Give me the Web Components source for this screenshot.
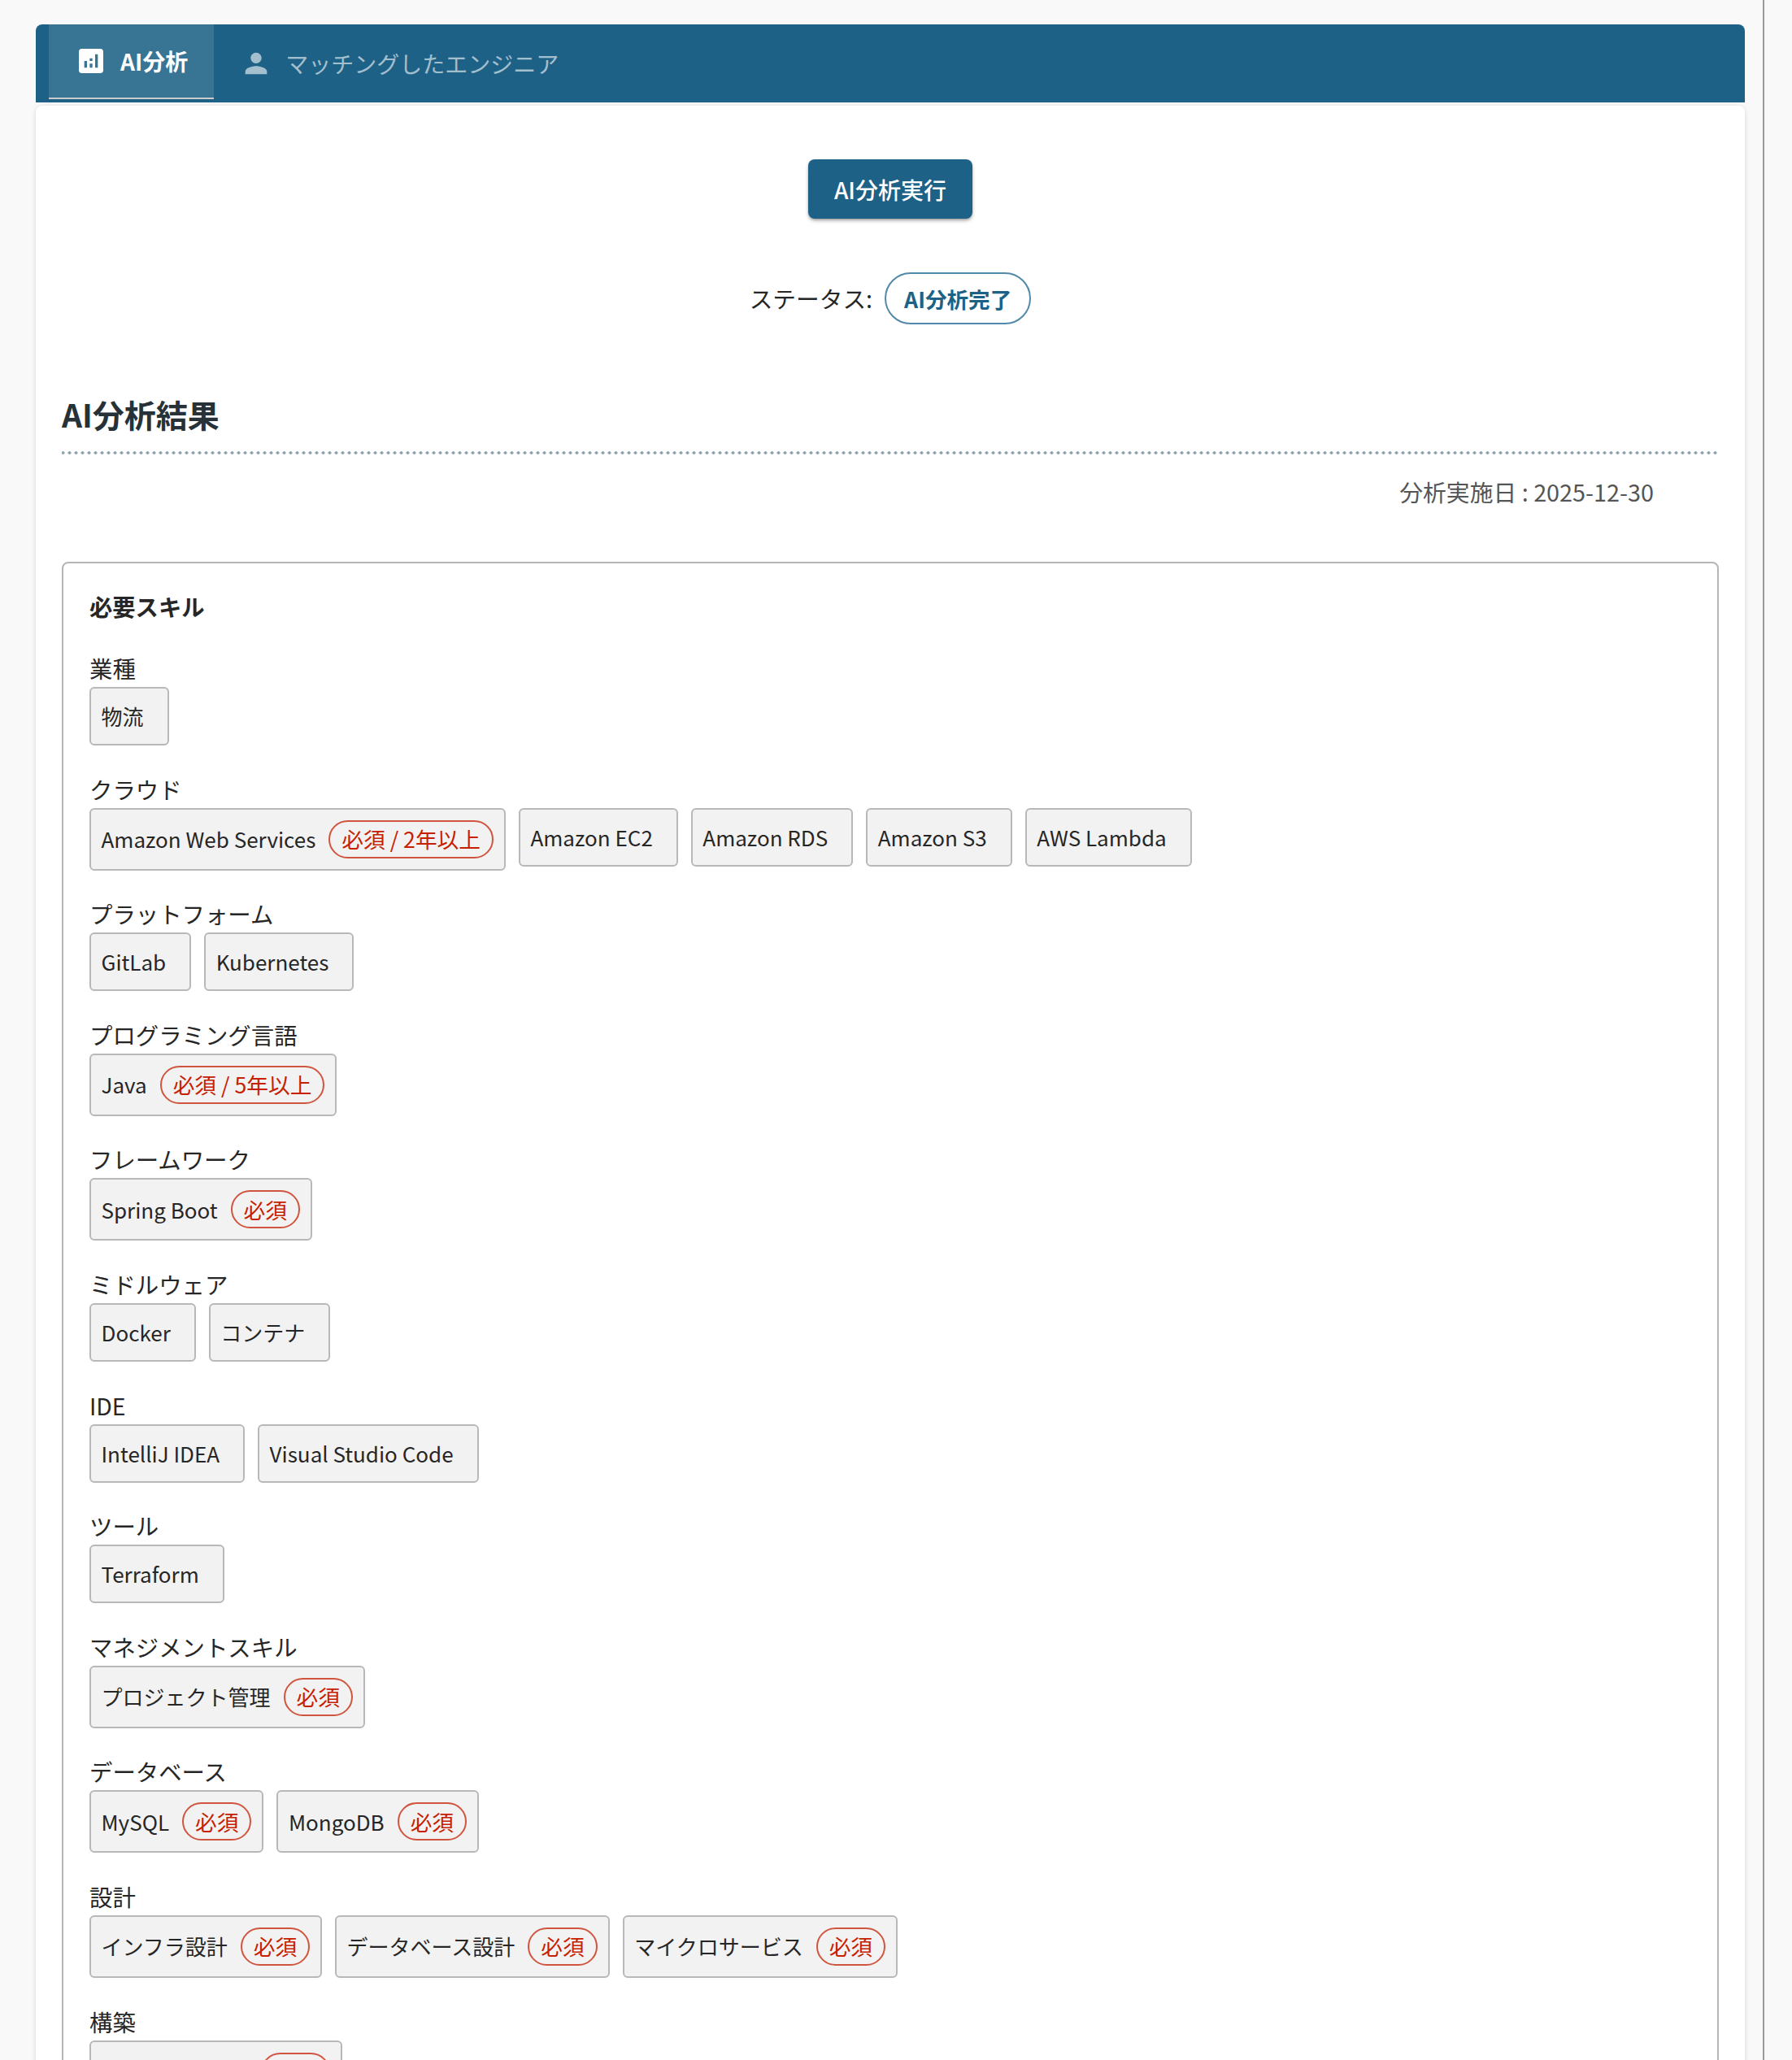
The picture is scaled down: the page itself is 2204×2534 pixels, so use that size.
<!DOCTYPE html>
<html lang="ja">
<head>
<meta charset="utf-8">
<title>AI分析</title>
<style>
  html, body { margin: 0; height: 2534px; overflow: hidden; background: #f9f9f9; }
  body { font-family: "Noto Sans CJK JP", "Noto Sans", sans-serif; color: #262626; }
</style>
</head>
<body>

<app-shell>
  <tab-bar slot="tabs">
    <tab-item icon="analytics" active>AI分析</tab-item>
    <tab-item icon="person">マッチングしたエンジニア</tab-item>
  </tab-bar>

  <action-panel></action-panel>
  <section-title>AI分析結果</section-title>
  <analysis-date>分析実施日 : 2025-12-30</analysis-date>

  <skill-box heading="必要スキル">
    <skill-group label="業種"><skill-chip>物流</skill-chip></skill-group>
    <skill-group label="クラウド">
      <skill-chip badge="必須 / 2年以上">Amazon Web Services</skill-chip>
      <skill-chip>Amazon EC2</skill-chip>
      <skill-chip>Amazon RDS</skill-chip>
      <skill-chip>Amazon S3</skill-chip>
      <skill-chip>AWS Lambda</skill-chip>
    </skill-group>
    <skill-group label="プラットフォーム">
      <skill-chip>GitLab</skill-chip>
      <skill-chip>Kubernetes</skill-chip>
    </skill-group>
    <skill-group label="プログラミング言語"><skill-chip badge="必須 / 5年以上">Java</skill-chip></skill-group>
    <skill-group label="フレームワーク"><skill-chip badge="必須">Spring Boot</skill-chip></skill-group>
    <skill-group label="ミドルウェア">
      <skill-chip>Docker</skill-chip>
      <skill-chip>コンテナ</skill-chip>
    </skill-group>
    <skill-group label="IDE">
      <skill-chip>IntelliJ IDEA</skill-chip>
      <skill-chip>Visual Studio Code</skill-chip>
    </skill-group>
    <skill-group label="ツール"><skill-chip>Terraform</skill-chip></skill-group>
    <skill-group label="マネジメントスキル"><skill-chip badge="必須">プロジェクト管理</skill-chip></skill-group>
    <skill-group label="データベース">
      <skill-chip badge="必須">MySQL</skill-chip>
      <skill-chip badge="必須">MongoDB</skill-chip>
    </skill-group>
    <skill-group label="設計">
      <skill-chip badge="必須">インフラ設計</skill-chip>
      <skill-chip badge="必須">データベース設計</skill-chip>
      <skill-chip badge="必須">マイクロサービス</skill-chip>
    </skill-group>
    <!-- the chip's own text is below the fold in the reference, only its width shows -->
    <skill-group label="構築"><skill-chip badge="必須" style="width: 311px"></skill-chip></skill-group>
  </skill-box>
</app-shell>

<script>
const ICONS = {
    analytics: 'M19 3H5c-1.1 0-2 .9-2 2v14c0 1.1.9 2 2 2h14c1.1 0 2-.9 2-2V5c0-1.1-.9-2-2-2zM9 17H7v-5h2v5zm4 0h-2v-3h2v3zm0-5h-2v-2h2v2zm4 5h-2V7h2v10z',
    person: 'M12 12c2.21 0 4-1.79 4-4s-1.79-4-4-4-4 1.79-4 4 1.79 4 4 4zm0 2c-2.67 0-8 1.34-8 4v2h16v-2c0-2.66-5.33-4-8-4z'
};

class AppShell extends HTMLElement {
    constructor() {
        super();
        this.attachShadow({ mode: 'open' });
        this.shadowRoot.innerHTML = `
            <style>
                :host {
                    display: block;
                    box-sizing: border-box;
                    width: 2170px;
                    height: 2534px;
                    padding: 30px 22px 0 44px;
                    border-right: 2px solid #999;
                    overflow: hidden;
                }
                .panel {
                    margin-top: 4px;
                    padding: 66px 32px 0;
                    background: #fff;
                    border-radius: 8px 8px 0 0;
                    box-shadow: 0 1px 6px rgba(0, 0, 0, 0.14);
                    height: 2500px;
                    box-sizing: border-box;
                }
            </style>
            <slot name="tabs"></slot>
            <div class="panel"><slot></slot></div>
        `;
    }
}

class TabBar extends HTMLElement {
    constructor() {
        super();
        this.attachShadow({ mode: 'open' });
        this.shadowRoot.innerHTML = `
            <style>
                :host {
                    display: flex;
                    align-items: flex-start;
                    height: 96px;
                    padding: 0 16px;
                    background: #1d6186;
                    border-radius: 8px 8px 0 0;
                }
            </style>
            <slot></slot>
        `;
    }
}

class TabItem extends HTMLElement {
    constructor() {
        super();
        this.attachShadow({ mode: 'open' });
        const path = ICONS[this.getAttribute('icon')];
        this.shadowRoot.innerHTML = `
            <style>
                :host {
                    display: flex;
                    align-items: center;
                    gap: 16px;
                    box-sizing: border-box;
                    height: 96px;
                    padding: 0 32px;
                    font-size: 28px;
                    color: rgba(255, 255, 255, 0.6);
                }
                :host([active]) {
                    height: 92px;
                    color: #fff;
                    font-weight: 700;
                    background: rgba(255, 255, 255, 0.12);
                    border-bottom: 2px solid #ccc;
                }
                svg { width: 40px; height: 40px; fill: currentColor; display: block; }
            </style>
            <svg viewBox="0 0 24 24"><path d="${path}"/></svg>
            <slot></slot>
        `;
    }
}

class ActionPanel extends HTMLElement {
    constructor() {
        super();
        this.attachShadow({ mode: 'open' });
        this.shadowRoot.innerHTML = `
            <style>
                :host {
                    display: flex;
                    flex-direction: column;
                    align-items: center;
                    gap: 66px;
                }
                button {
                    height: 73px;
                    padding: 0 32px;
                    border: 0;
                    border-radius: 8px;
                    background: #1d6186;
                    color: #fff;
                    font: 500 28px "Noto Sans CJK JP", sans-serif;
                    box-shadow: 0 3px 5px -1px rgba(0,0,0,.35), 0 1px 3px rgba(0,0,0,.15);
                }
                .status { display: flex; align-items: center; gap: 15px; font-size: 28.7px; color: #262626; }
                .status .text { padding-bottom: 2px; }
                .pill {
                    box-sizing: border-box;
                    height: 64px;
                    padding: 0 22px;
                    display: flex;
                    align-items: center;
                    border: 2px solid #5089a9;
                    border-radius: 32px;
                    color: #1d6186;
                    font-size: 26.6px;
                    font-weight: 700;
                }
            </style>
            <button>AI分析実行</button>
            <div class="status"><span class="text">ステータス:</span><span class="pill">AI分析完了</span></div>
        `;
    }
}

class SectionTitle extends HTMLElement {
    constructor() {
        super();
        this.attachShadow({ mode: 'open' });
        this.shadowRoot.innerHTML = `
            <style>
                :host {
                    display: block;
                    margin-top: 80px;
                    padding-bottom: 20px;
                    font-size: 39px;
                    font-weight: 700;
                    line-height: 60px;
                    color: #263238;
                    background: radial-gradient(circle, #90a4ae 1.7px, transparent 2px) -2.5px 100% / 8px 4px repeat-x;
                }
            </style>
            <slot></slot>
        `;
    }
}

class AnalysisDate extends HTMLElement {
    constructor() {
        super();
        this.attachShadow({ mode: 'open' });
        this.shadowRoot.innerHTML = `
            <style>
                :host {
                    display: block;
                    margin-top: 25px;
                    padding-right: 80px;
                    text-align: right;
                    font-size: 28.8px;
                    line-height: 42px;
                    color: #555;
                }
            </style>
            <slot></slot>
        `;
    }
}

class SkillBox extends HTMLElement {
    constructor() {
        super();
        this.attachShadow({ mode: 'open' });
        this.shadowRoot.innerHTML = `
            <style>
                :host {
                    display: block;
                    margin-top: 65px;
                    padding: 32px;
                    border: 2px solid #b5b5b5;
                    border-radius: 8px;
                    background: #fff;
                }
                h3 { margin: 0 0 34px; font-size: 28.3px; font-weight: 700; line-height: 42px; color: #262626; }
            </style>
            <h3>${this.getAttribute('heading')}</h3>
            <slot></slot>
        `;
    }
}

class SkillGroup extends HTMLElement {
    constructor() {
        super();
        this.attachShadow({ mode: 'open' });
        this.shadowRoot.innerHTML = `
            <style>
                :host { display: block; margin-bottom: 32.6px; }
                .label { margin-bottom: 2px; font-size: 28.4px; line-height: 42px; color: #262626; }
                .chips { display: flex; flex-wrap: wrap; align-items: flex-start; gap: 16px; }
            </style>
            <div class="label">${this.getAttribute('label')}</div>
            <div class="chips"><slot></slot></div>
        `;
    }
}

class SkillChip extends HTMLElement {
    constructor() {
        super();
        this.attachShadow({ mode: 'open' });
        const badge = this.getAttribute('badge');
        this.shadowRoot.innerHTML = `
            <style>
                :host {
                    display: flex;
                    align-items: center;
                    gap: 16px;
                    box-sizing: border-box;
                    padding: 13px 13px 13px 12.5px;
                    border: 2px solid #b8b8b8;
                    border-radius: 6px;
                    background: #f2f2f2;
                    font-size: 26px;
                    line-height: 42px;
                    color: #262626;
                }
                :host(:not([badge])) { padding-right: 29px; }
                .badge {
                    box-sizing: border-box;
                    height: 47px;
                    margin-left: auto;
                    padding: 0 14px;
                    display: flex;
                    align-items: center;
                    border: 2px solid #d0553f;
                    border-radius: 24px;
                    font-size: 26.7px;
                    color: #c62000;
                }
            </style>
            <slot></slot>
            ${badge ? `<span class="badge">${badge}</span>` : ''}
        `;
    }
}

customElements.define('app-shell', AppShell);
customElements.define('tab-bar', TabBar);
customElements.define('tab-item', TabItem);
customElements.define('action-panel', ActionPanel);
customElements.define('section-title', SectionTitle);
customElements.define('analysis-date', AnalysisDate);
customElements.define('skill-box', SkillBox);
customElements.define('skill-group', SkillGroup);
customElements.define('skill-chip', SkillChip);
</script>
</body>
</html>
